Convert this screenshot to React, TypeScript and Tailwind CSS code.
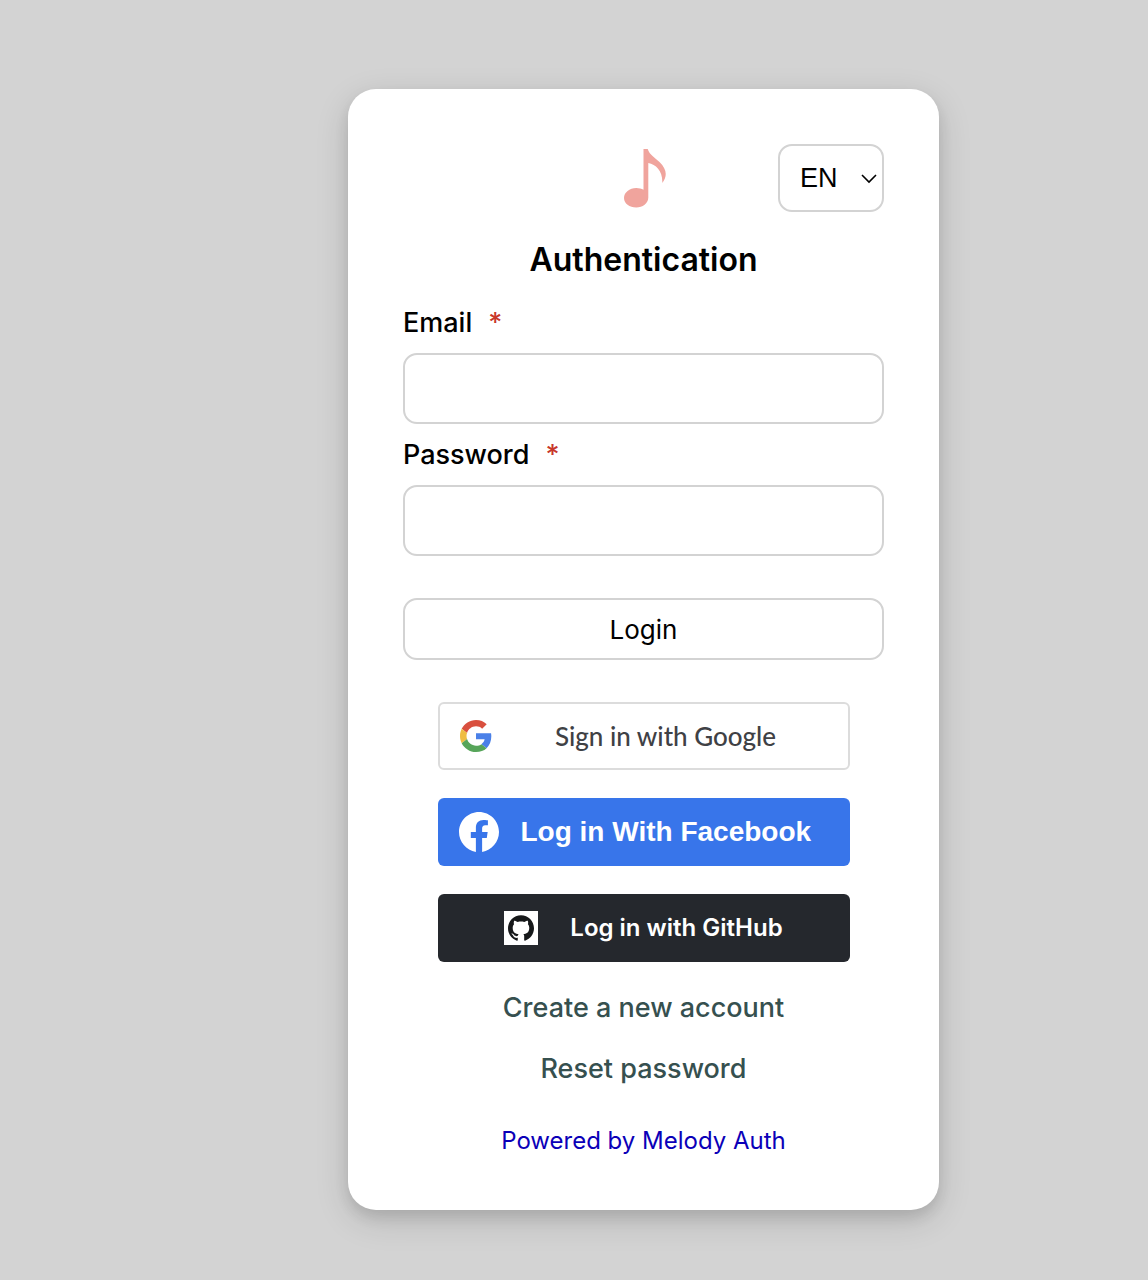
import React, { useState } from "react";

function Note() {
  return (
    <svg viewBox="0 0 42 60" className="h-[60px] w-[42px]" fill="#f0a49d" aria-hidden="true">
      <path d="M19.5 1H23.7C25.500 7 31 9.500 35.500 14C43 21.500 43.500 28 38.300 35C38.800 23 32 16.500 24.300 15V49.500C24.300 55.500 18.500 59.500 12.300 59.500C5.500 59.500 0 55.500 0 50C0 44.500 5.500 40 12.300 40C15 40 17.600 40.700 19.500 41.800Z" />
    </svg>
  );
}

function GoogleLogo() {
  return (
    <svg viewBox="0 0 48 48" className="h-8 w-8" aria-hidden="true">
      <path fill="#d9503f" d="M24 9.500c3.540 0 6.710 1.220 9.210 3.600l6.850-6.850C35.900 2.380 30.470 0 24 0 14.620 0 6.510 5.380 2.560 13.220l7.980 6.190C12.430 13.720 17.740 9.500 24 9.500z" />
      <path fill="#4a80e8" d="M46.980 24.550c0-1.570-.15-3.090-.38-4.550H24v9.020h12.940c-.58 2.960-2.260 5.480-4.780 7.180l7.730 6c4.510-4.180 7.090-10.360 7.090-17.650z" />
      <path fill="#efbd42" d="M10.530 28.590c-.48-1.450-.76-2.990-.76-4.590s.27-3.140.76-4.590l-7.980-6.190C.92 16.460 0 20.120 0 24c0 3.880.92 7.540 2.560 10.780l7.970-6.190z" />
      <path fill="#57a55a" d="M24 48c6.480 0 11.930-2.130 15.890-5.810l-7.730-6c-2.150 1.450-4.920 2.300-8.160 2.300-6.260 0-11.570-4.220-13.470-9.910l-7.980 6.190C6.510 42.620 14.620 48 24 48z" />
    </svg>
  );
}

function FacebookLogo() {
  return (
    <svg viewBox="0 0 24 24" className="h-10 w-10" fill="#ffffff" aria-hidden="true">
      <path d="M24 12.073c0-6.627-5.373-12-12-12s-12 5.373-12 12c0 5.990 4.388 10.954 10.125 11.854v-8.385H7.078v-3.470h3.047V9.430c0-3.007 1.792-4.669 4.533-4.669 1.312 0 2.686.235 2.686.235v2.953H15.830c-1.491 0-1.956.925-1.956 1.874v2.250h3.328l-.532 3.470h-2.796v8.385C19.612 23.027 24 18.062 24 12.073z" />
    </svg>
  );
}

function GitHubLogo() {
  return (
    <span className="flex h-[34px] w-[34px] items-center justify-center bg-white">
      <svg viewBox="0 0 24 24" className="h-[26px] w-[26px]" fill="#16181a" aria-hidden="true">
        <path d="M12 .297c-6.630 0-12 5.373-12 12 0 5.303 3.438 9.800 8.205 11.385.6.113.82-.258.82-.577 0-.285-.010-1.040-.015-2.040-3.338.724-4.042-1.610-4.042-1.610C4.422 18.070 3.633 17.700 3.633 17.700c-1.087-.744.084-.729.084-.729 1.205.084 1.838 1.236 1.838 1.236 1.070 1.835 2.809 1.305 3.495.998.108-.776.417-1.305.76-1.605-2.665-.3-5.466-1.332-5.466-5.930 0-1.310.465-2.380 1.235-3.220-.135-.303-.54-1.523.105-3.176 0 0 1.005-.322 3.300 1.230.96-.267 1.980-.399 3-.405 1.020.006 2.040.138 3 .405 2.280-1.552 3.285-1.230 3.285-1.230.645 1.653.24 2.873.12 3.176.765.840 1.230 1.910 1.230 3.220 0 4.610-2.805 5.625-5.475 5.920.42.360.81 1.096.81 2.220 0 1.606-.015 2.896-.015 3.286 0 .315.210.690.825.570C20.565 22.092 24 17.592 24 12.297c0-6.627-5.373-12-12-12" />
      </svg>
    </span>
  );
}

function Field({ id, label, type }: { id: string; label: string; type: string }) {
  return (
    <div className="flex flex-col gap-3">
      <label htmlFor={id} className="flex gap-4 text-[27px] leading-9 font-medium">
        {label}
        <span className="text-[#c8372b]">*</span>
      </label>
      <input
        id={id}
        type={type}
        required
        className="h-[71px] w-full rounded-[14px] border-2 border-[#d3d3d3] bg-white px-5 text-[27px] outline-none"
      />
    </div>
  );
}

export default function App() {
  const [lang, setLang] = useState("EN");
  return (
    <main className="flex min-h-screen items-start justify-center bg-[#d3d3d3] pt-[89px] pb-[70px] pl-[139px] font-['Inter',sans-serif] text-black">
      <section className="w-full max-w-[591px] rounded-[28px] bg-white px-[55px] pt-[55px] pb-[51px] shadow-[0_7px_14px_rgba(0,0,0,0.1),0_10px_34px_rgba(0,0,0,0.14)]">
        <header className="grid grid-cols-[1fr_auto_1fr] items-center">
          <span className="col-start-2 pl-0.5">
            <Note />
          </span>
          <div className="relative w-[106px] justify-self-end">
            <select
              aria-label="Language"
              value={lang}
              onChange={(e) => setLang(e.target.value)}
              className="h-[68px] w-full appearance-none rounded-[14px] border-2 border-[#d3d3d3] bg-white pl-5 font-['Liberation_Sans',sans-serif] text-[27px] outline-none"
            >
              <option>EN</option>
              <option>FR</option>
            </select>
            <svg viewBox="0 0 16 10" className="pointer-events-none absolute top-[30px] right-[7px] h-2.5 w-4" fill="none" stroke="#000" strokeWidth="1.600" aria-hidden="true">
              <path d="M1 1L8 8L15 1" />
            </svg>
          </div>
        </header>

        <h1 className="mt-7 text-center text-[32px] leading-10 font-semibold">Authentication</h1>

        <form className="mt-[25px] flex flex-col" onSubmit={(e) => e.preventDefault()}>
          <div className="flex flex-col gap-[13px]">
            <Field id="email" label="Email" type="email" />
            <Field id="password" label="Password" type="password" />
          </div>
          <button type="submit" className="mt-[42px] h-[62px] rounded-[14px] border-2 border-[#d3d3d3] bg-white text-[26px]">
            Login
          </button>
        </form>

        <div className="mx-auto mt-[42px] flex max-w-[412px] flex-col gap-7">
          <button type="button" className="flex h-[68px] items-center rounded-md border-2 border-[#dcdcdc] bg-white pl-5 font-['Lato',sans-serif] text-[26px] font-medium text-[#3f4145]">
            <GoogleLogo />
            <span className="flex-1 pr-2">Sign in with Google</span>
          </button>
          <button type="button" className="flex h-[68px] items-center gap-[22px] rounded-md bg-[#3875ea] pl-[21px] font-['Liberation_Sans',sans-serif] text-[28px] font-bold text-white">
            <FacebookLogo />
            Log in With Facebook
          </button>
          <button type="button" className="flex h-[68px] items-center justify-center gap-8 rounded-md bg-[#25282d] text-[24px] font-semibold text-white">
            <GitHubLogo />
            Log in with GitHub
          </button>
        </div>

        <nav className="mt-7 flex flex-col items-center text-[27px] leading-9 font-medium text-[#36504f]">
          <a href="#create">Create a new account</a>
          <a href="#reset" className="mt-[25px]">Reset password</a>
          <a href="#melody" className="mt-9 text-2xl leading-9 font-normal text-[#0b00b8]">Powered by Melody Auth</a>
        </nav>
      </section>
    </main>
  );
}
